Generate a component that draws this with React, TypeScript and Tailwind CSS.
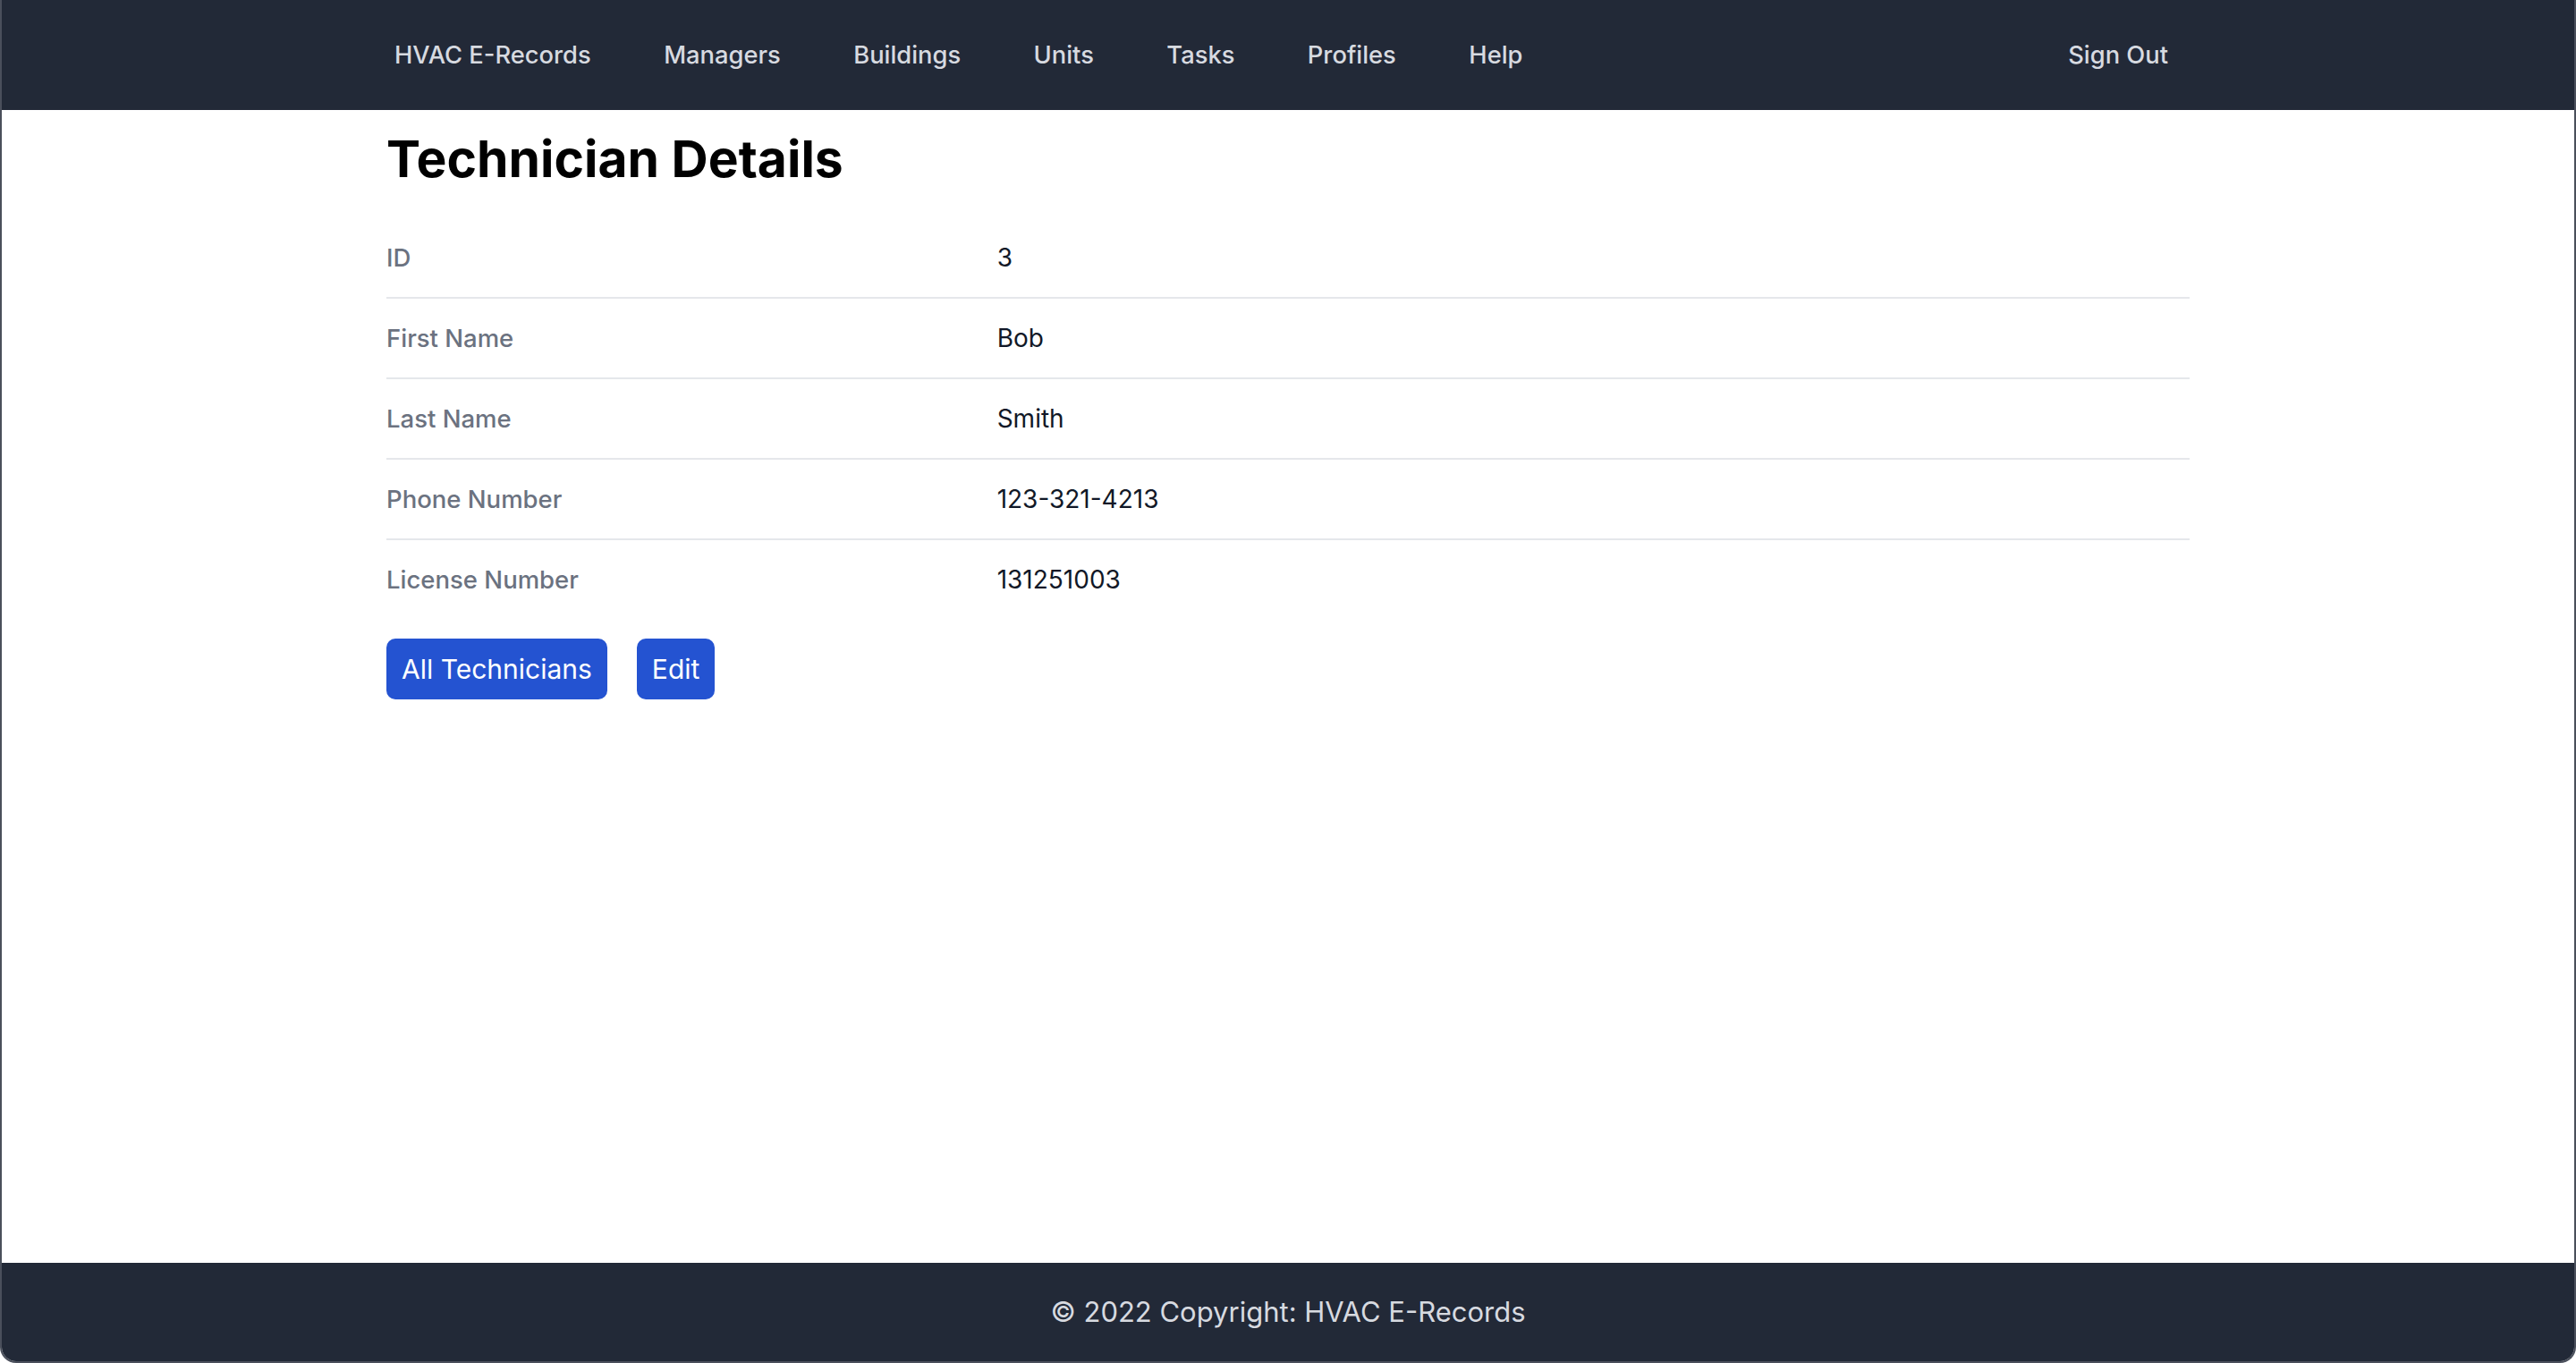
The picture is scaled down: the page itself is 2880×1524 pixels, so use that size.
import React from 'react';

const navLinks = ['HVAC E-Records', 'Managers', 'Buildings', 'Units', 'Tasks', 'Profiles', 'Help'];

const details = [
  { label: 'ID', value: '3' },
  { label: 'First Name', value: 'Bob' },
  { label: 'Last Name', value: 'Smith' },
  { label: 'Phone Number', value: '123-321-4213' },
  { label: 'License Number', value: '131251003' },
];

export default function App() {
  return (
    <div className="min-h-screen flex flex-col bg-white font-['Inter','Liberation_Sans',sans-serif] border-x-2 border-b-2 border-[#4a4f5b] rounded-b-[18px] overflow-hidden">
      {/* top nav */}
      <nav className="h-[123px] bg-[#222937] shrink-0">
        <div className="max-w-[2048px] h-full mx-auto pl-[25px] pr-[40px] flex items-center justify-between">
          <div className="flex items-center gap-[81.5px]">
            {navLinks.map((link) => (
              <a key={link} href="#" className="text-[27.3px] leading-[40px] font-medium text-[#d7dae0]">
                {link}
              </a>
            ))}
          </div>
          <a href="#" className="text-[27.3px] leading-[40px] font-medium text-[#d7dae0]">
            Sign Out
          </a>
        </div>
      </nav>

      <main className="flex-1">
        <div className="max-w-[2048px] mx-auto px-[16px]">
          <h1 className="mt-[19px] mb-[30px] text-[57px] leading-[72px] font-bold text-black">
            Technician Details
          </h1>

          <dl className="divide-y-2 divide-[#e5e7eb]">
            {details.map((row) => (
              <div key={row.label} className="grid grid-cols-3 gap-[32px] py-[24px]">
                <dt className="text-[27.5px] leading-[40px] font-medium text-[#6b7280]">{row.label}</dt>
                <dd className="col-span-2 text-[28px] leading-[40px] text-[#111827]">{row.value}</dd>
              </div>
            ))}
          </dl>

          <div className="mt-[22px] flex items-center gap-[33px]">
            <button className="h-[68px] px-[17px] rounded-[10px] bg-[#2453d1] text-white text-[30px] leading-[48px]">
              All Technicians
            </button>
            <button className="h-[68px] px-[17px] rounded-[10px] bg-[#2453d1] text-white text-[30px] leading-[48px]">
              Edit
            </button>
          </div>
        </div>
      </main>

      <footer className="h-[110px] bg-[#222937] shrink-0 flex items-center justify-center">
        <p className="text-[31px] leading-[44px] text-[#d7dae0]">© 2022 Copyright: HVAC E-Records</p>
      </footer>
    </div>
  );
}
